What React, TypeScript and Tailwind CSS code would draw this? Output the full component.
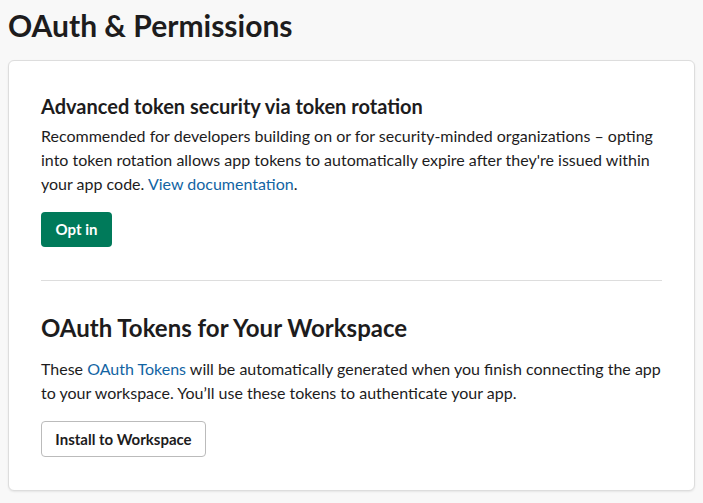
export default function App() {
  return (
    <div
      className="min-h-[503px] bg-[#f8f8f8] px-2 pt-[3px] pb-[14px] text-[#1d1c1d]"
      style={{ fontFamily: 'Lato, "Noto Sans", sans-serif' }}
    >
      <h1 className="text-[30px] font-bold leading-[44px] text-[#1d1c1d]">
        OAuth &amp; Permissions
      </h1>
      <div className="mt-[13px] w-[687px] rounded-[6px] border border-[#dddddd] bg-white px-8 pt-[31px] pb-[33px] shadow-[0_1px_2px_rgba(0,0,0,0.08)]">
        <h2 className="text-[20px] font-bold leading-[28px]">Advanced token security via token rotation</h2>
        <p className="mt-[4px] text-[16px] leading-[24px] text-[#1d1c1d]">
          Recommended for developers building on or for security-minded organizations – opting into token rotation
          allows app tokens to automatically expire after they're issued within your app code.{' '}
          <span className="text-[#1264a3]">View documentation</span>.
        </p>
        <button className="mt-[16px] flex h-[35px] w-[71px] items-center justify-center rounded-[4px] bg-[#007a5a] text-[15px] font-bold text-white">
          Opt in
        </button>
        <div className="mt-[33px] h-px bg-[#dddddd]" />
        <h2 className="mt-[32px] text-[24px] font-bold leading-[30px]">OAuth Tokens for Your Workspace</h2>
        <p className="mt-[14px] text-[16px] leading-[24px]">
          These <span className="text-[#1264a3]">OAuth Tokens</span> will be automatically generated when you finish
          connecting the app to your workspace. You’ll use these tokens to authenticate your app.
        </p>
        <button className="mt-[16px] flex h-[36px] w-[165px] items-center justify-center rounded-[4px] border border-[#bbbbbb] bg-white text-[15px] font-bold text-[#1d1c1d]">
          Install to Workspace
        </button>
      </div>
    </div>
  );
}
